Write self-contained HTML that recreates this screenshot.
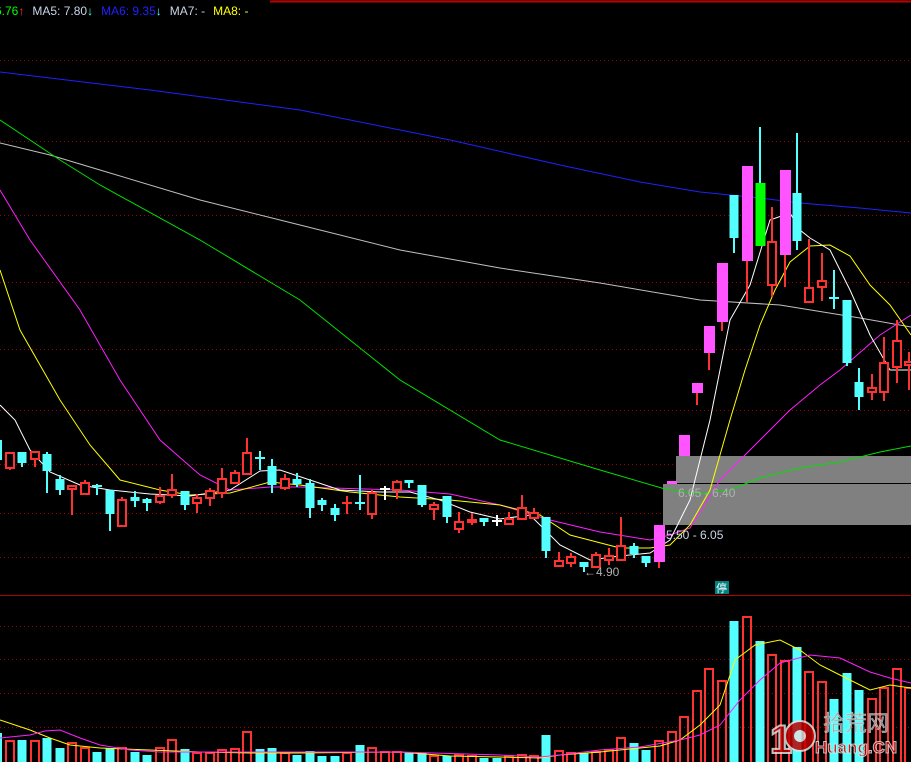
<!DOCTYPE html>
<html><head><meta charset="utf-8"><style>
html,body{margin:0;padding:0;background:#000;width:911px;height:762px;overflow:hidden}
svg{display:block}
text{font-family:"Liberation Sans","Noto Sans CJK SC",sans-serif}
</style></head><body>
<svg width="911" height="762" viewBox="0 0 911 762" xmlns="http://www.w3.org/2000/svg">
<rect width="911" height="762" fill="#000"/>
<line x1="270" y1="1.5" x2="911" y2="1.5" stroke="#c00000" stroke-width="2"/>
<g stroke="#a00000" stroke-width="1" stroke-dasharray="1,3">
<line x1="0" y1="60.5" x2="911" y2="60.5"/><line x1="0" y1="141.5" x2="911" y2="141.5"/>
<line x1="0" y1="215.5" x2="911" y2="215.5"/><line x1="0" y1="282.5" x2="911" y2="282.5"/>
<line x1="0" y1="349.5" x2="911" y2="349.5"/><line x1="0" y1="410.5" x2="911" y2="410.5"/>
<line x1="0" y1="464.5" x2="911" y2="464.5"/><line x1="0" y1="513.5" x2="911" y2="513.5"/>
<line x1="0" y1="557.5" x2="911" y2="557.5"/>
<line x1="0" y1="626.5" x2="911" y2="626.5"/><line x1="0" y1="659.5" x2="911" y2="659.5"/>
<line x1="0" y1="693.5" x2="911" y2="693.5"/><line x1="0" y1="727.5" x2="911" y2="727.5"/>
</g>
<line x1="0" y1="595.5" x2="911" y2="595.5" stroke="#b00000" stroke-width="1"/>
<!-- gray zones -->
<rect x="676" y="456" width="235" height="27" fill="#808080"/>
<rect x="663" y="484" width="248" height="41" fill="#808080"/>
<line x1="663" y1="483.5" x2="911" y2="483.5" stroke="#000"/>
<!-- MA lines -->
<g fill="none" stroke-width="1">
<polyline stroke="#2020ff" points="0,72 150,90 300,110 450,140 560,165 640,182 700,192 760,198 800,203 860,208 911,213"/>
<polyline stroke="#c0c0c0" points="0,143 50,155 100,170 200,200 300,225 400,250 500,268 600,283 700,300 780,305 860,318 911,327"/>
<polyline stroke="#00e000" points="0,120 60,160 100,185 200,240 300,300 400,380 500,440 600,470 665,489 700,494 730,490 760,478 800,468 840,462 880,452 911,446"/>
<polyline stroke="#ff20ff" points="0,190 30,240 80,310 120,380 160,440 200,475 230,490 270,487 300,487 400,490 450,494 500,505 550,520 600,532 650,540 670,535 690,528 720,480 760,440 790,410 820,385 840,370 880,335 911,315"/>
<polyline stroke="#ffff00" points="0,270 20,330 60,400 90,445 120,480 160,490 190,495 230,493 270,482 300,485 350,492 400,497 450,500 500,505 540,515 570,535 620,548 650,548 670,545 690,525 710,490 730,420 745,370 760,325 775,290 790,262 810,246 830,245 850,256 870,285 890,305 911,335"/>
<polyline stroke="#ffffff" points="0,405 15,420 30,450 50,472 80,485 110,490 150,494 190,496 230,490 260,471 280,470 310,480 340,490 380,492 410,492 440,500 470,512 500,519 530,515 560,545 590,560 620,556 650,553 670,540 690,500 710,420 730,320 750,285 770,220 790,213 800,230 810,238 830,250 850,290 870,335 890,370 911,370"/>
</g>
<!-- candles -->
<g id="c">
<!-- cyan -->
<g fill="#54ffff" stroke="#54ffff" stroke-width="2">
<rect x="-7" y="440" width="9" height="20" stroke="none"/>
<line x1="22" y1="452" x2="22" y2="467"/><rect x="17.5" y="452" width="9" height="11" stroke="none"/>
<line x1="47" y1="452" x2="47" y2="493"/><rect x="42.5" y="454" width="9" height="17" stroke="none"/>
<line x1="60" y1="475" x2="60" y2="495"/><rect x="55.5" y="479" width="9" height="11" stroke="none"/>
<line x1="97" y1="484" x2="97" y2="495"/><line x1="92" y1="486" x2="102" y2="486"/>
<line x1="110" y1="490" x2="110" y2="531"/><rect x="105.5" y="490" width="9" height="24" stroke="none"/>
<line x1="135" y1="491" x2="135" y2="507"/><rect x="130.5" y="497" width="9" height="4" stroke="none"/>
<line x1="147" y1="498" x2="147" y2="511"/><rect x="142.5" y="499" width="9" height="4" stroke="none"/>
<line x1="185" y1="491" x2="185" y2="510"/><rect x="180.5" y="491" width="9" height="14" stroke="none"/>
<line x1="260" y1="451" x2="260" y2="470"/><line x1="255" y1="458" x2="265" y2="458"/>
<line x1="272" y1="459" x2="272" y2="493"/><rect x="267.5" y="466" width="9" height="19" stroke="none"/>
<line x1="297" y1="473" x2="297" y2="487"/><rect x="292.5" y="479" width="9" height="5" stroke="none"/>
<line x1="310" y1="479" x2="310" y2="518"/><rect x="305.5" y="483" width="9" height="25" stroke="none"/>
<line x1="322" y1="498" x2="322" y2="511"/><rect x="317.5" y="500" width="9" height="5" stroke="none"/>
<line x1="335" y1="504" x2="335" y2="521"/><rect x="330.5" y="508" width="9" height="7" stroke="none"/>
<line x1="360" y1="475" x2="360" y2="510"/><line x1="355" y1="503" x2="365" y2="503"/>
<line x1="409" y1="480" x2="409" y2="488"/><rect x="404.5" y="480" width="9" height="3" stroke="none"/>
<line x1="422" y1="485" x2="422" y2="507"/><rect x="417.5" y="485" width="9" height="20" stroke="none"/>
<line x1="447" y1="496" x2="447" y2="523"/><rect x="442.5" y="496" width="9" height="21" stroke="none"/>
<line x1="484" y1="518" x2="484" y2="526"/><rect x="479.5" y="518" width="9" height="4" stroke="none"/>
<line x1="546" y1="517" x2="546" y2="558"/><rect x="541.5" y="517" width="9" height="34" stroke="none"/>
<line x1="584" y1="562" x2="584" y2="572"/><rect x="579.5" y="562" width="9" height="5" stroke="none"/>
<line x1="634" y1="543" x2="634" y2="558"/><rect x="629.5" y="546" width="9" height="8" stroke="none"/>
<line x1="646" y1="556" x2="646" y2="567"/><rect x="641.5" y="556" width="9" height="7" stroke="none"/>
<line x1="734" y1="195" x2="734" y2="253"/><rect x="729.5" y="195" width="9" height="43" stroke="none"/>
<line x1="797" y1="133" x2="797" y2="250"/><rect x="792.5" y="193" width="9" height="48" stroke="none"/>
<line x1="834" y1="270" x2="834" y2="309"/><line x1="829" y1="298" x2="839" y2="298"/>
<line x1="847" y1="300" x2="847" y2="366"/><rect x="842.5" y="300" width="9" height="63" stroke="none"/>
<line x1="859" y1="368" x2="859" y2="410"/><rect x="854.5" y="382" width="9" height="15" stroke="none"/>
<line x1="760" y1="127" x2="760" y2="183"/>
</g>
<rect x="755.5" y="183" width="10" height="63" fill="#00ff00"/>
<!-- white crosses -->
<g stroke="#fff" stroke-width="2">
<line x1="385" y1="486" x2="385" y2="500"/><line x1="380" y1="489" x2="390" y2="489"/>
<line x1="497" y1="515" x2="497" y2="526"/><line x1="492" y1="521" x2="502" y2="521"/>
</g>
<!-- pink -->
<g fill="#ff54ff">
<line x1="659" y1="525" x2="659" y2="568" stroke="#ff3232" stroke-width="2"/><rect x="654" y="525" width="11" height="37"/>
<rect x="667" y="481" width="10" height="3"/>
<rect x="679" y="435" width="11" height="21"/>
<line x1="697" y1="383" x2="697" y2="405" stroke="#ff3232" stroke-width="2"/><rect x="692" y="383" width="11" height="10"/>
<line x1="709" y1="326" x2="709" y2="370" stroke="#ff3232" stroke-width="2"/><rect x="704" y="326" width="11" height="27"/>
<line x1="722" y1="263" x2="722" y2="331" stroke="#ff3232" stroke-width="2"/><rect x="717" y="263" width="11" height="59"/>
<line x1="747" y1="166" x2="747" y2="302" stroke="#ff3232" stroke-width="2"/><rect x="742" y="166" width="11" height="95"/>
<line x1="785" y1="170" x2="785" y2="287" stroke="#ff3232" stroke-width="2"/><rect x="780" y="170" width="11" height="85"/>
</g>
<!-- red hollow -->
<g stroke="#ff3232" stroke-width="2" fill="#000">
<line x1="10" y1="452" x2="10" y2="470"/><rect x="6" y="453" width="8" height="15"/>
<line x1="35" y1="452" x2="35" y2="467"/><rect x="31" y="452" width="8" height="7"/>
<line x1="72" y1="486" x2="72" y2="515"/><rect x="68" y="486" width="8" height="3"/>
<line x1="85" y1="480" x2="85" y2="494"/><rect x="81" y="483" width="8" height="11"/>
<line x1="122" y1="497" x2="122" y2="526"/><rect x="118" y="500" width="8" height="26"/>
<line x1="160" y1="487" x2="160" y2="504"/><rect x="156" y="496" width="8" height="6"/>
<line x1="172" y1="474" x2="172" y2="498"/><rect x="168" y="490" width="8" height="5"/>
<line x1="197" y1="494" x2="197" y2="513"/><rect x="193" y="498" width="8" height="5"/>
<line x1="210" y1="488" x2="210" y2="506"/><rect x="206" y="491" width="8" height="7"/>
<line x1="222" y1="468" x2="222" y2="498"/><rect x="218" y="479" width="8" height="14"/>
<line x1="235" y1="470" x2="235" y2="483"/><rect x="231" y="473" width="8" height="10"/>
<line x1="247" y1="438" x2="247" y2="474"/><rect x="243" y="453" width="8" height="21"/>
<line x1="285" y1="474" x2="285" y2="490"/><rect x="281" y="479" width="8" height="9"/>
<line x1="347" y1="496" x2="347" y2="514"/><line x1="342" y1="503" x2="352" y2="503"/>
<line x1="372" y1="490" x2="372" y2="519"/><rect x="368" y="493" width="8" height="21"/>
<line x1="397" y1="480" x2="397" y2="499"/><rect x="393" y="482" width="8" height="8"/>
<line x1="434" y1="502" x2="434" y2="520"/><rect x="430" y="505" width="8" height="4"/>
<line x1="459" y1="512" x2="459" y2="533"/><rect x="455" y="522" width="8" height="7"/>
<line x1="472" y1="513" x2="472" y2="525"/><rect x="468" y="520" width="8" height="2"/>
<line x1="509" y1="512" x2="509" y2="524"/><rect x="505" y="519" width="8" height="5"/>
<line x1="522" y1="495" x2="522" y2="519"/><rect x="518" y="508" width="8" height="11"/>
<line x1="534" y1="508" x2="534" y2="519"/><rect x="530" y="513" width="8" height="5"/>
<line x1="559" y1="552" x2="559" y2="566"/><rect x="555" y="561" width="8" height="5"/>
<line x1="571" y1="553" x2="571" y2="567"/><rect x="567" y="557" width="8" height="6"/>
<line x1="596" y1="552" x2="596" y2="567"/><rect x="592" y="555" width="8" height="12"/>
<line x1="609" y1="548" x2="609" y2="565"/><rect x="605" y="556" width="8" height="4"/>
<line x1="621" y1="517" x2="621" y2="560"/><rect x="617" y="546" width="8" height="14"/>
<line x1="772" y1="207" x2="772" y2="297"/><rect x="768" y="242" width="8" height="43"/>
<line x1="809" y1="239" x2="809" y2="302"/><rect x="805" y="288" width="8" height="14"/>
<line x1="822" y1="253" x2="822" y2="301"/><rect x="818" y="281" width="8" height="6"/>
<line x1="872" y1="374" x2="872" y2="400"/><rect x="868" y="388" width="8" height="4"/>
<line x1="884" y1="337" x2="884" y2="401"/><rect x="880" y="363" width="8" height="29"/>
<line x1="897" y1="320" x2="897" y2="383"/><rect x="893" y="341" width="8" height="26"/>
<line x1="909" y1="352" x2="909" y2="390"/><rect x="905" y="362" width="8" height="3"/>
</g>
</g>
<!-- labels -->
<text x="678" y="497" font-size="12" fill="#b0b0b0">6.05 - 6.40</text>
<text x="666" y="539" font-size="12" fill="#c8d4e8">5.50 - 6.05</text>
<text x="584" y="576" font-size="12" fill="#b0b0b0">←4.90</text>
<rect x="715" y="581" width="14" height="13" fill="#008080"/>
<text x="716" y="592" font-size="11" fill="#fff">停</text>
<!-- volume -->
<g fill="#54ffff">
<rect x="-7" y="733" width="9" height="29"/><rect x="17.5" y="740" width="9" height="22"/>
<rect x="42.5" y="738" width="9" height="24"/><rect x="55.5" y="748" width="9" height="14"/>
<rect x="92.5" y="752" width="9" height="10"/><rect x="105.5" y="748" width="9" height="14"/>
<rect x="130.5" y="752" width="9" height="10"/><rect x="142.5" y="755" width="9" height="7"/>
<rect x="180.5" y="749" width="9" height="13"/><rect x="255.5" y="749" width="9" height="13"/>
<rect x="267.5" y="748" width="9" height="14"/><rect x="292.5" y="755" width="9" height="7"/>
<rect x="305.5" y="751" width="9" height="11"/><rect x="317.5" y="756" width="9" height="6"/>
<rect x="330.5" y="756" width="9" height="6"/><rect x="355.5" y="745" width="9" height="17"/>
<rect x="404.5" y="753" width="9" height="9"/><rect x="417.5" y="753" width="9" height="9"/>
<rect x="442.5" y="756" width="9" height="6"/><rect x="479.5" y="758" width="9" height="4"/>
<rect x="492.5" y="758" width="9" height="4"/><rect x="541.5" y="735" width="9" height="27"/>
<rect x="579.5" y="753" width="9" height="9"/><rect x="629.5" y="743" width="9" height="19"/>
<rect x="641.5" y="750" width="9" height="12"/><rect x="729.5" y="621" width="9" height="141"/>
<rect x="755.5" y="641" width="9" height="121"/><rect x="792.5" y="647" width="9" height="115"/>
<rect x="829.5" y="699" width="9" height="63"/><rect x="842.5" y="673" width="9" height="89"/>
<rect x="854.5" y="690" width="9" height="72"/>
</g>
<g fill="none" stroke="#ff3232" stroke-width="2">
<rect x="6" y="741" width="8" height="22"/><rect x="31" y="741" width="8" height="22"/>
<rect x="68" y="743" width="8" height="20"/><rect x="81" y="748" width="8" height="15"/>
<rect x="118" y="748" width="8" height="15"/><rect x="156" y="748" width="8" height="15"/>
<rect x="168" y="740" width="8" height="23"/><rect x="193" y="753" width="8" height="10"/>
<rect x="206" y="753" width="8" height="10"/><rect x="218" y="750" width="8" height="13"/>
<rect x="231" y="749" width="8" height="14"/><rect x="243" y="732" width="8" height="31"/>
<rect x="281" y="753" width="8" height="10"/><rect x="343" y="753" width="8" height="10"/>
<rect x="368" y="748" width="8" height="15"/><rect x="381" y="752" width="8" height="11"/>
<rect x="393" y="752" width="8" height="11"/><rect x="430" y="756" width="8" height="7"/>
<rect x="455" y="755" width="8" height="8"/><rect x="468" y="756" width="8" height="7"/>
<rect x="505" y="756" width="8" height="7"/><rect x="518" y="755" width="8" height="8"/>
<rect x="530" y="756" width="8" height="7"/><rect x="555" y="751" width="8" height="12"/>
<rect x="567" y="753" width="8" height="10"/><rect x="592" y="752" width="8" height="11"/>
<rect x="605" y="750" width="8" height="13"/><rect x="617" y="738" width="8" height="25"/>
<rect x="655" y="741" width="8" height="22"/><rect x="668" y="732" width="8" height="31"/>
<rect x="680" y="717" width="8" height="46"/><rect x="693" y="691" width="8" height="72"/>
<rect x="705" y="669" width="8" height="94"/><rect x="718" y="681" width="8" height="82"/>
<rect x="743" y="617" width="8" height="146"/><rect x="768" y="655" width="8" height="108"/>
<rect x="781" y="661" width="8" height="102"/><rect x="805" y="672" width="8" height="91"/>
<rect x="818" y="682" width="8" height="81"/><rect x="868" y="699" width="8" height="64"/>
<rect x="880" y="688" width="8" height="75"/><rect x="893" y="669" width="8" height="94"/>
<rect x="905" y="688" width="8" height="75"/>
</g>
<g fill="none" stroke-width="1">
<polyline stroke="#ffff00" points="0,720 30,730 50,738 70,745 100,748 150,750 200,752 250,753 300,753 400,752 450,756 500,757 540,758 560,755 600,752 640,748 660,746 680,740 700,725 720,705 735,660 755,645 780,640 800,650 820,665 840,675 870,690 890,685 911,688"/>
<polyline stroke="#ff20ff" points="0,738 30,735 45,731 60,730 80,738 100,745 130,750 160,752 200,752 300,752 400,752 500,755 540,757 560,755 600,750 640,747 680,740 700,735 720,725 740,700 760,680 780,663 810,655 840,658 870,672 890,678 911,683"/>
</g>
<!-- watermark -->
<g opacity="0.85">
<text x="770" y="753" font-size="40" font-weight="bold" fill="#c00000" stroke="#e0e0e0" stroke-width="2">1</text>
<circle cx="800" cy="736" r="15" fill="#c00000" stroke="#e0e0e0" stroke-width="2"/>
<circle cx="800" cy="736" r="6" fill="#e0e0e0"/>
<text x="823" y="731" font-size="22" fill="#a0a0a0" stroke="#e0e0e0" stroke-width="0.5">拾荒网</text>
<text x="815" y="753" font-size="17" font-weight="bold" fill="#c00000" stroke="#e0e0e0" stroke-width="1">Huang.CN</text>
</g>
<!-- header -->
<text y="15" font-size="12"><tspan x="-5" fill="#00ff00">6.76</tspan><tspan fill="#ff3232">↑</tspan><tspan dx="8" fill="#c8d4e8">MA5: 7.80</tspan><tspan fill="#54ffff">↓</tspan><tspan dx="8" fill="#2020ff">MA6: 9.35</tspan><tspan fill="#54ffff">↓</tspan><tspan dx="8" fill="#c8d4e8">MA7: -</tspan><tspan dx="8" fill="#ffff00">MA8: -</tspan></text>
</svg>
</body></html>
